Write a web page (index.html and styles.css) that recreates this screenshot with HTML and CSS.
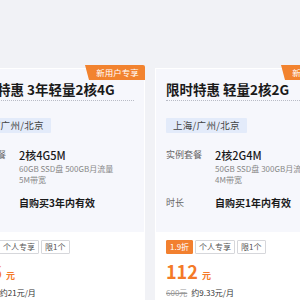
FILE: index.html
```html
<!DOCTYPE html>
<html lang="zh">
<head>
<meta charset="utf-8">
<link rel="stylesheet" href="styles.css">
</head>
<body>
<div class="row">
  <div class="card">
    <div class="badge">新用户专享</div>
    <div class="top">
      <div class="title">限时特惠 3年轻量2核4G</div>
      <div class="region">上海/广州/北京</div>
      <div class="item">
        <div class="label">实例套餐</div>
        <div class="val">
          <div class="main">2核4G5M</div>
          <div class="spec">60GB SSD盘 500GB月流量</div>
          <div class="spec">5M带宽</div>
        </div>
      </div>
      <div class="item dur">
        <div class="label">时长</div>
        <div class="val"><div class="main strong">自购买3年内有效</div></div>
      </div>
    </div>
    <div class="bottom">
      <div class="tags"><span class="tag hot">1.5折</span><span class="tag">个人专享</span><span class="tag">限1个</span></div>
      <div class="price"><span class="num">756</span><span class="unit">元</span></div>
      <div class="sub"><span class="old">5040元</span><span class="per">约21元/月</span></div>
    </div>
  </div>
  <div class="card">
    <div class="badge">新用户专享</div>
    <div class="top">
      <div class="title">限时特惠 轻量2核2G</div>
      <div class="region">上海/广州/北京</div>
      <div class="item">
        <div class="label">实例套餐</div>
        <div class="val">
          <div class="main">2核2G4M</div>
          <div class="spec">50GB SSD盘 300GB月流量</div>
          <div class="spec">4M带宽</div>
        </div>
      </div>
      <div class="item dur">
        <div class="label">时长</div>
        <div class="val"><div class="main strong">自购买1年内有效</div></div>
      </div>
    </div>
    <div class="bottom">
      <div class="tags"><span class="tag hot">1.9折</span><span class="tag">个人专享</span><span class="tag">限1个</span></div>
      <div class="price"><span class="num">112</span><span class="unit">元</span></div>
      <div class="sub"><span class="old">600元</span><span class="per">约9.33元/月</span></div>
    </div>
  </div>
</div>
</body>
</html>
```
FILE: styles.css
```css
html, body {
  margin: 0;
  padding: 0;
  background: #f1f2f6;
  font-family: "Noto Sans CJK SC", "Noto Sans", sans-serif;
  color: #222;
  overflow: hidden;
}
.row {
  display: flex;
  gap: 10px;
  padding-top: 68px;
  margin-left: -41px;
}
.card {
  position: relative;
  flex: 0 0 186px;
  background: #fff;
  border: 1px solid #fff;
  box-sizing: border-box;
}
.badge {
  position: absolute;
  top: -4px;
  right: -1px;
  width: 60px;
  height: 15px;
  background: #f2832f;
  color: #fff;
  font-size: 8.5px;
  line-height: 15px;
  text-align: center;
  padding-left: 5px;
  box-sizing: border-box;
  clip-path: polygon(0 0, 100% 0, 100% 100%, 4px 100%);
  border-top-right-radius: 2px;
}
.top {
  background: #f6f7fc;
  padding: 10px 10px 0;
  height: 163px;
  box-sizing: border-box;
}
.title {
  font-size: 13.5px;
  font-weight: 700;
  line-height: 20px;
  color: #1a1a1a;
  padding-bottom: 1px;
  border-bottom: 1px dotted #b9bcc6;
  white-space: nowrap;
}
.region {
  width: fit-content;
  margin-top: 17px;
  background: #e3ebfa;
  color: #444;
  font-size: 9.5px;
  line-height: 15px;
  padding: 0 7px;
  letter-spacing: 0.3px;
  border-radius: 1px;
}
.item {
  display: flex;
  margin-top: 14px;
}
.label {
  width: 49px;
  flex: none;
  font-size: 9px;
  line-height: 16px;
  color: #666;
}
.main {
  font-size: 11px;
  line-height: 16px;
  font-weight: 500;
  color: #1a1a1a;
  white-space: nowrap;
}
.strong {
  font-weight: 700;
  font-size: 10px;
}
.spec {
  font-size: 8px;
  line-height: 11px;
  color: #888;
  white-space: nowrap;
}
.item.dur {
  margin-top: 10px;
}
.bottom {
  padding: 8px 10px 0;
}
.tags {
  display: flex;
  gap: 2px;
}
.tag {
  font-size: 8px;
  line-height: 12px;
  padding: 0 3px;
  border: 1px solid #d6d7db;
  color: #555;
  border-radius: 1px;
}
.tag.hot {
  background: #f2802f;
  border-color: #f2802f;
  color: #fff;
}
.price {
  margin-top: 6px;
  color: #f47a28;
  line-height: 22px;
}
.num {
  font-size: 18px;
  font-weight: 700;
}
.unit {
  font-size: 9px;
  font-weight: 700;
  margin-left: 4px;
}
.sub {
  font-size: 8px;
  line-height: 12px;
}
.old {
  color: #999;
  text-decoration: line-through;
  margin-right: 4px;
}
.per {
  color: #333;
}
```
